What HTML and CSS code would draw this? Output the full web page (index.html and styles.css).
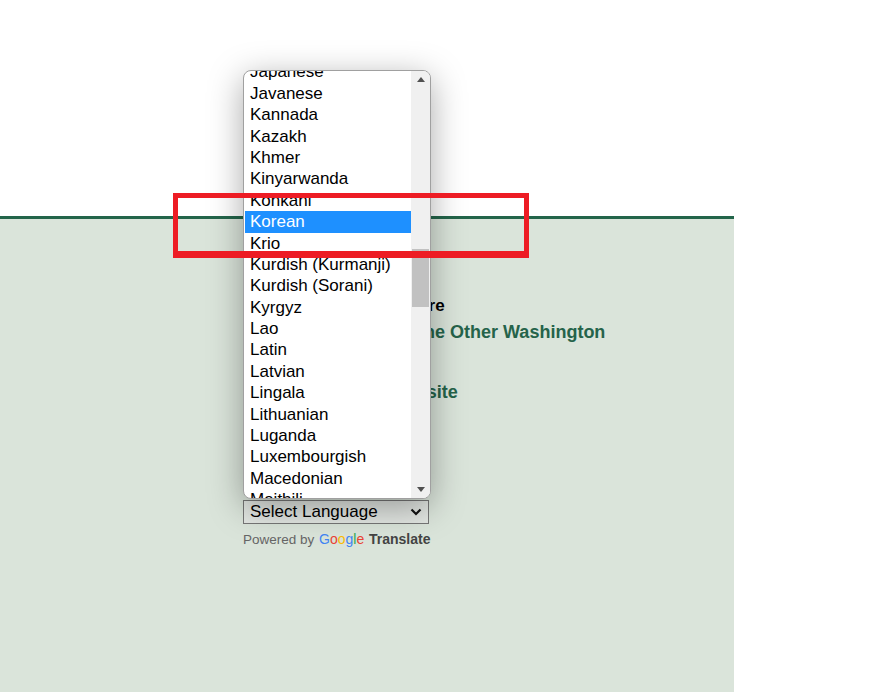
FILE: index.html
```html
<!DOCTYPE html>
<html lang="en">
<head>
  <meta charset="UTF-8" />
  <meta name="viewport" content="width=device-width, initial-scale=1.0"/>
  <title>Visit the Other Washington</title>
  <link rel="stylesheet" href="styles.css">
</head>
<body>

  <div class="top"></div>

  <div class="band">
    <div class="info">
      <h3 class="info-title">Explore More</h3>
      <a class="info-link" href="#">Discover the Other Washington</a>
      <a class="info-link far" href="#">Go to Website</a>
    </div>

    <div class="translate">
      <div class="picker">
        <div class="popup">
          <div class="options">
            <div class="options-inner">
              <div class="opt">Japanese</div>
              <div class="opt">Javanese</div>
              <div class="opt">Kannada</div>
              <div class="opt">Kazakh</div>
              <div class="opt">Khmer</div>
              <div class="opt">Kinyarwanda</div>
              <div class="opt">Konkani</div>
              <div class="opt selected">Korean</div>
              <div class="opt">Krio</div>
              <div class="opt">Kurdish (Kurmanji)</div>
              <div class="opt">Kurdish (Sorani)</div>
              <div class="opt">Kyrgyz</div>
              <div class="opt">Lao</div>
              <div class="opt">Latin</div>
              <div class="opt">Latvian</div>
              <div class="opt">Lingala</div>
              <div class="opt">Lithuanian</div>
              <div class="opt">Luganda</div>
              <div class="opt">Luxembourgish</div>
              <div class="opt">Macedonian</div>
              <div class="opt">Maithili</div>
              <div class="opt">Malagasy</div>
            </div>
          </div>
          <div class="scrollbar">
            <div class="arrow up"></div>
            <div class="track"><div class="thumb"></div></div>
            <div class="arrow down"></div>
          </div>
        </div>
        <div class="select">
          <span>Select Language</span>
          <svg width="12" height="8" viewBox="0 0 12 8"><path d="M1.5 1.5 L6 6 L10.5 1.5" fill="none" stroke="#111" stroke-width="2.2"/></svg>
        </div>
      </div>
      <div class="powered">
        Powered by
        <span class="google"><span class="g-blue">G</span><span class="g-red">o</span><span class="g-yellow">o</span><span class="g-blue">g</span><span class="g-green">l</span><span class="g-red">e</span></span>
        <b>Translate</b>
      </div>
    </div>
  </div>

  <div class="callout"></div>

</body>
</html>
```

FILE: styles.css
```css
body {
  font-family: "Liberation Sans", Arial, sans-serif;
  background: #fff;
  margin: 0;
  height: 692px;
  overflow: hidden;
}

.top { height: 216px; }

.band {
  width: 734px;
  height: 476px;
  background: #dae4da;
  border-top: 3px solid #23654a;
  padding-top: 76px;
  box-sizing: border-box;
}

.info { padding-left: 337px; }

.info-title {
  margin: 0;
  font-size: 17px;
  line-height: 22px;
  color: #000;
}

.info-link {
  display: block;
  margin-top: 4px;
  font-size: 18px;
  line-height: 22px;
  font-weight: bold;
  color: #25634a;
  text-decoration: none;
}

.info-link.far { margin-top: 38px; }

.translate {
  margin-top: 97px;
  padding-left: 243px;
}

.picker {
  position: relative;
  width: 186px;
}

.select {
  height: 24px;
  border: 1px solid #767676;
  box-sizing: border-box;
  background: #e2e6e2;
  font-size: 17px;
  padding: 0 6px;
  display: flex;
  align-items: center;
  justify-content: space-between;
}

.popup {
  position: absolute;
  left: 0;
  bottom: calc(100% + 1px);
  width: 188px;
  height: 429px;
  box-sizing: border-box;
  border: 1px solid #a0a0a0;
  border-radius: 8px;
  background: #fff;
  overflow: hidden;
  display: flex;
  box-shadow: 0 8px 34px rgba(0,0,0,0.34);
  z-index: 2;
}

.options {
  flex: 1;
  padding-left: 1px;
  overflow: hidden;
}

.options-inner { margin-top: -9.6px; }

.opt {
  height: 21.4px;
  line-height: 21.4px;
  padding-left: 5px;
  font-size: 17px;
  color: #000;
  white-space: nowrap;
}

.opt.selected {
  background: #1e90ff;
  color: #fff;
}

.scrollbar {
  width: 19px;
  background: #f0f0f0;
  display: flex;
  flex-direction: column;
}

.arrow {
  height: 17px;
  display: flex;
  align-items: center;
  justify-content: center;
}

.arrow::before {
  content: "";
  border-left: 4.5px solid transparent;
  border-right: 4.5px solid transparent;
}

.arrow.up::before { border-bottom: 5px solid #505050; }
.arrow.down::before { border-top: 5px solid #505050; }

.track { flex: 1; }

.thumb {
  margin: 161px 1px 0 1px;
  height: 58px;
  background: #c1c1c1;
}

.powered {
  margin-top: 7px;
  font-size: 13.5px;
  line-height: 16px;
  color: #666;
}

.powered b { color: #444; font-size: 14px; }

.google {
  font-size: 14px;
  margin: 0 1px;
}

.g-blue { color: #4285f4; }
.g-red { color: #ea4335; }
.g-yellow { color: #fbbc05; }
.g-green { color: #34a853; }

.callout {
  position: absolute;
  left: 173px;
  top: 193px;
  width: 356px;
  height: 65px;
  box-sizing: border-box;
  border: 5px solid #ed1c24;
  border-bottom-width: 7px;
  z-index: 3;
}
```
